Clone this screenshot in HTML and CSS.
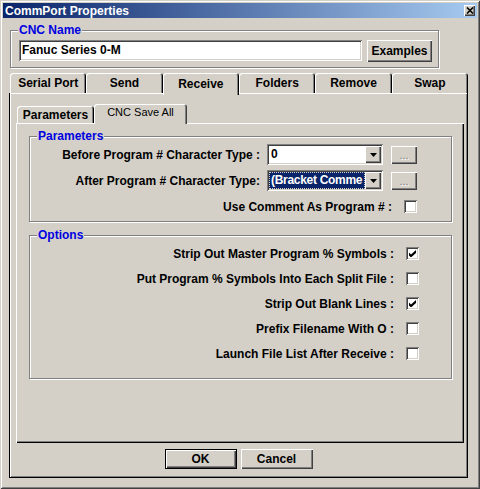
FILE: index.html
```html
<!doctype html>
<html>

<head>
  <title>CommPort Properties</title>
  <link rel="stylesheet" href="styles.css">
</head>

<body>
  <div class="window">
    <div class="titlebar">
      <span class="title">CommPort Properties</span>
      <div class="close-btn">
        <svg width="8" height="7" viewBox="0 0 8 7"><path d="M1 0.5l6 6M7 0.5l-6 6" stroke="#000" stroke-width="1.6" fill="none"/></svg>
      </div>
    </div>

    <!-- CNC name -->
    <div class="group cnc-group">
      <span class="legend">CNC Name</span>
      <div class="field">Fanuc Series 0-M</div>
      <div class="btn examples-btn">Examples</div>
    </div>

    <div class="tabs">
      <div class="tab">Serial Port</div>
      <div class="tab">Send</div>
      <div class="tab active">Receive</div>
      <div class="tab">Folders</div>
      <div class="tab">Remove</div>
      <div class="tab">Swap</div>
    </div>

    <div class="tab-page">
      <div class="subtabs">
        <div class="subtab">Parameters</div>
        <div class="subtab active">CNC Save All</div>
      </div>

      <div class="sub-page">
        <div class="group params-group">
          <span class="legend">Parameters</span>
          <div class="row">
            <span class="label">Before Program # Character Type :</span>
            <div class="combo">
              <div class="combo-text">0</div>
              <div class="combo-arrow"><svg width="7" height="4" viewBox="0 0 7 4"><path d="M0 0h7L3.5 4z" fill="#000"/></svg></div>
            </div>
            <div class="btn dots-btn">...</div>
          </div>
          <div class="row">
            <span class="label">After Program # Character Type:</span>
            <div class="combo">
              <div class="combo-text selected">(Bracket Comme</div>
              <div class="combo-arrow"><svg width="7" height="4" viewBox="0 0 7 4"><path d="M0 0h7L3.5 4z" fill="#000"/></svg></div>
            </div>
            <div class="btn dots-btn">...</div>
          </div>
          <div class="row">
            <span class="label check-label">Use Comment As Program # :</span>
            <div class="check"></div>
          </div>
        </div>

        <div class="group options-group">
          <span class="legend">Options</span>
          <div class="row">
            <span class="label check-label">Strip Out Master Program % Symbols :</span>
            <div class="check"><svg width="7" height="7" viewBox="0 0 7 7"><path d="M0 2.5l2 2 5-4.5v3l-5 4.5-2-2z" fill="#000"/></svg></div>
          </div>
          <div class="row">
            <span class="label check-label">Put Program % Symbols Into Each Split File :</span>
            <div class="check"></div>
          </div>
          <div class="row">
            <span class="label check-label">Strip Out Blank Lines :</span>
            <div class="check"><svg width="7" height="7" viewBox="0 0 7 7"><path d="M0 2.5l2 2 5-4.5v3l-5 4.5-2-2z" fill="#000"/></svg></div>
          </div>
          <div class="row">
            <span class="label check-label">Prefix Filename With O :</span>
            <div class="check"></div>
          </div>
          <div class="row">
            <span class="label check-label">Launch File List After Receive :</span>
            <div class="check"></div>
          </div>
        </div>
      </div>

      <div class="dialog-buttons">
        <div class="btn default-btn">OK</div>
        <div class="btn">Cancel</div>
      </div>
    </div>
  </div>
</body>

</html>
```

FILE: styles.css
```css
* {
  box-sizing: border-box;
}

body {
  margin: 0;
  background-color: #d4d0c8;
  font-family: "Liberation Sans", Arial, sans-serif;
  font-size: 12px;
  font-weight: bold;
  color: #000;
}

.window {
  width: 480px;
  height: 489px;
  padding: 3px;
  display: flex;
  flex-direction: column;
  box-shadow: inset 1px 1px #d4d0c8, inset -1px -1px #404040,
    inset 2px 2px #fff, inset -2px -2px #808080;
}

/* title bar */
.titlebar {
  height: 15px;
  padding: 0 2px 0 2px;
  display: flex;
  align-items: center;
  justify-content: space-between;
  background: linear-gradient(to right, #0a246a, #a6caf0);
  color: #fff;
}

.close-btn {
  width: 11px;
  height: 11px;
  display: flex;
  align-items: center;
  justify-content: center;
  background-color: #d4d0c8;
  box-shadow: inset 1px 1px #fff, inset -1px -1px #404040, inset -2px -2px #808080;
}

/* 3d pieces */
.btn {
  display: flex;
  align-items: center;
  justify-content: center;
  background-color: #d4d0c8;
  box-shadow: inset 1px 1px #fff, inset -1px -1px #404040, inset -2px -2px #808080;
}

.group {
  position: relative;
  width: 423px;
  border: 1px solid #808080;
  box-shadow: inset 1px 1px #fff, 1px 1px #fff;
}

.legend {
  position: absolute;
  top: -8px;
  left: 7px;
  padding: 0 1px;
  line-height: 14px;
  background-color: #d4d0c8;
  color: #0000e0;
}

/* CNC name box */
.cnc-group {
  width: 429px;
  height: 38px;
  margin: 12px 0 0 7px;
  padding: 9px 0 0 8px;
  display: flex;
  align-items: flex-start;
  gap: 5px;
}

.field {
  width: 343px;
  height: 21px;
  padding: 0 3px;
  line-height: 21px;
  background-color: #fff;
  box-shadow: inset 1px 1px #808080, inset -1px -1px #fff,
    inset 2px 2px #404040, inset -2px -2px #d4d0c8;
}

.examples-btn {
  width: 65px;
  height: 22px;
}

/* main tabs */
.tabs {
  display: flex;
  align-items: flex-start;
  width: 458px;
  height: 20px;
  margin: 5px 0 0 7px;
}

.tab {
  flex: 1;
  height: 20px;
  line-height: 20px;
  text-align: center;
  border-radius: 3px 3px 0 0;
  box-shadow: inset 1px 1px #fff, inset -1px 0 #000, inset -2px 0 #808080;
}

.tab.active {
  position: relative;
  z-index: 1;
  height: 22px;
  line-height: 22px;
  background-color: #d4d0c8;
}

.tab-page {
  width: 459px;
  height: 385px;
  margin-left: 6px;
  border: 1px solid #000;
  border-top: none;
  box-shadow: inset 1px 1px #fff, inset -1px -1px #808080;
  display: flex;
  flex-direction: column;
}

/* inner tabs */
.subtabs {
  display: flex;
  align-items: flex-end;
  height: 19px;
  margin: 11px 0 0 7px;
}

.subtab {
  width: 77px;
  height: 17px;
  padding-top: 2px;
  line-height: 15px;
  text-align: center;
  border-radius: 3px 3px 0 0;
  box-shadow: inset 1px 1px #fff, inset -1px 0 #000, inset -2px 0 #808080;
}

.subtab.active {
  position: relative;
  z-index: 1;
  width: 93px;
  height: 20px;
  margin-bottom: -1px;
  padding-top: 1px;
  font-size: 11px;
  font-weight: normal;
  background-color: #d4d0c8;
  box-shadow: inset 1px 1px #fff, inset -1px 0 #404040, inset -2px 0 #808080;
}

.sub-page {
  width: 448px;
  height: 320px;
  margin-left: 6px;
  padding: 13px 0 0 13px;
  box-shadow: inset 1px 1px #fff, inset -1px -1px #000, inset -2px -2px #808080;
}

.params-group {
  height: 86px;
  padding: 7px 34px 0 0;
  display: flex;
  flex-direction: column;
  gap: 5px;
}

.options-group {
  height: 144px;
  margin-top: 13px;
  padding: 7px 32px 0 0;
  display: flex;
  flex-direction: column;
  gap: 4px;
}

.row {
  height: 21px;
  display: flex;
  align-items: center;
  justify-content: flex-end;
}

.label {
  margin-right: 7px;
  white-space: nowrap;
}

.label.check-label {
  margin-right: 12px;
}

.combo {
  width: 116px;
  height: 21px;
  padding: 2px;
  display: flex;
  background-color: #fff;
  box-shadow: inset 1px 1px #808080, inset -1px -1px #fff,
    inset 2px 2px #404040, inset -2px -2px #d4d0c8;
}

.combo-text {
  flex: 1;
  min-width: 0;
  padding-left: 2px;
  line-height: 17px;
  white-space: nowrap;
  overflow: hidden;
}

.combo-text.selected {
  padding-left: 1px;
  line-height: 15px;
  letter-spacing: -0.3px;
  background-color: #0a246a;
  color: #fff;
  border: 1px dotted #d4d0c8;
}

.combo-arrow {
  width: 16px;
  height: 17px;
  display: flex;
  align-items: center;
  justify-content: center;
  background-color: #d4d0c8;
  box-shadow: inset 1px 1px #fff, inset -1px -1px #404040, inset -2px -2px #808080;
}

.dots-btn {
  width: 26px;
  height: 18px;
  margin-left: 8px;
  font-weight: normal;
  font-size: 11px;
  color: #808080;
  text-shadow: 1px 1px #fff;
}

.check {
  width: 13px;
  height: 13px;
  display: flex;
  align-items: center;
  justify-content: center;
  background-color: #fff;
  box-shadow: inset 1px 1px #808080, inset -1px -1px #fff,
    inset 2px 2px #404040, inset -2px -2px #d4d0c8;
}

/* OK / Cancel */
.dialog-buttons {
  display: flex;
  justify-content: center;
  gap: 4px;
  margin-top: 6px;
}

.dialog-buttons .btn {
  width: 72px;
  height: 20px;
}

.dialog-buttons .default-btn {
  border: 1px solid #000;
}
```
